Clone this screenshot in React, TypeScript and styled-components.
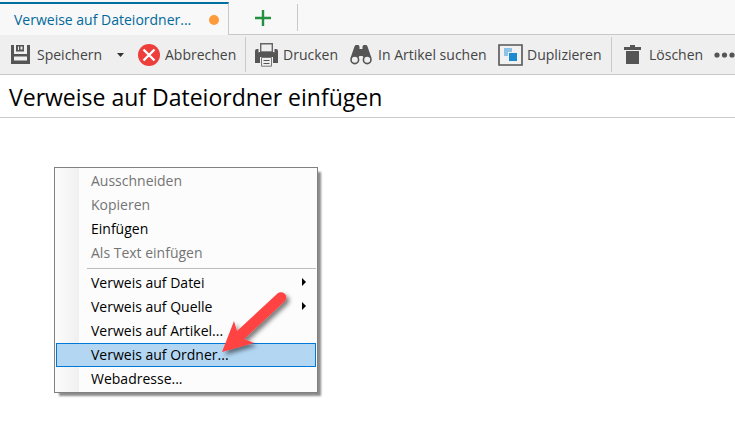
import React from "react";
import styled, { createGlobalStyle } from "styled-components";

const GlobalStyle = createGlobalStyle`
  *, *::before, *::after { box-sizing: border-box; }
  body { margin: 0; background: #fff; overflow-x: hidden; }
  body, button { font-family: "Open Sans", "Noto Sans", sans-serif; }
  button { border: 0; padding: 0; background: none; color: inherit; cursor: pointer; }
  svg { display: block; flex: none; }
`;

const TabStrip = styled.nav`
  display: flex;
  height: 35px;
  padding-top: 2px;
  background: #f8f8f8;
`;

const Tab = styled.button`
  display: flex;
  align-items: center;
  justify-content: space-between;
  width: 229px;
  padding: 0 9px 0 14px;
  border-top: 2px solid #0070a0;
  border-right: 1px solid #c8c8c8;
  color: #00699b;
  font-size: 14px;
  white-space: nowrap;
`;

const ModifiedDot = styled.span`
  width: 10px;
  height: 10px;
  border-radius: 50%;
  background: #fd9a3a;
`;

const TabRest = styled.div`
  display: flex;
  flex: 1;
  padding: 2px 0 3px;
  border-bottom: 1px solid #c8c8c8;
`;

const AddTab = styled.button`
  display: flex;
  align-items: center;
  justify-content: center;
  width: 69px;
  border-right: 1px solid #c8c8c8;
`;

const Toolbar = styled.div`
  display: flex;
  align-items: center;
  height: 40px;
  padding-left: 11px;
  overflow: hidden;
  border-bottom: 1px solid #cacaca;
  background: #efefef;
  color: #444;
`;

const ToolButton = styled.button<{ $width?: number; $gap?: number }>`
  display: flex;
  flex: none;
  align-items: center;
  gap: ${(p) => p.$gap ?? 5}px;
  width: ${(p) => (p.$width ? `${p.$width}px` : "auto")};
  height: 32px;
  font-size: 14px;
  white-space: nowrap;
`;

const Divider = styled.span<{ $space: number }>`
  flex: none;
  width: 1px;
  height: 35px;
  margin-right: ${(p) => p.$space}px;
  background: #cacaca;
`;

const Title = styled.h1`
  display: flex;
  align-items: center;
  height: 43px;
  margin: 0;
  padding: 2px 9px 0;
  border-bottom: 1px solid #cacaca;
  color: #000;
  font-size: 23px;
  font-weight: 400;
  white-space: nowrap;
`;

const Editor = styled.main`
  padding: 49px 54px 28px;
`;

const Menu = styled.div`
  position: relative;
  width: 264px;
  padding: 1px;
  border: 1px solid #808080;
  background: linear-gradient(90deg, #fcfcfc 1px, #fbfbfb 2px, #f0f0f0 24px, #fcfcfc 24px);
  box-shadow: 4px 4px 2px -1px #8c8c8c;
`;

const MenuItem = styled.button<{ $selected?: boolean }>`
  display: flex;
  align-items: center;
  justify-content: space-between;
  width: 100%;
  height: 24px;
  padding: 0 9px 2px 34px;
  border: 1px solid ${(p) => (p.$selected ? "#0078d7" : "transparent")};
  background: ${(p) => (p.$selected ? "#b3d7f3" : "transparent")};
  color: #000;
  font-size: 14px;
  white-space: nowrap;
  &:disabled { color: #747474; cursor: default; }
`;

const Separator = styled.hr`
  height: 1px;
  margin: 3px 0 2px 31px;
  border: 0;
  background: #bdbdbd;
`;

const Pointer = styled.svg`
  position: absolute;
  top: 118px;
  left: 161px;
  pointer-events: none;
`;

const SaveIcon = () => (
  <svg width="19" height="19" viewBox="0 0 19 19" aria-hidden="true">
    <path d="M0 0H3V9H16V0H19V19H0Z" fill="#555" />
    <path d="M5 0H13V6.5H5Z" fill="#555" />
    <path d="M7 1.5H8V5H7ZM9.5 1.5H11.5V4.5H9.5Z" fill="#efefef" />
    <path d="M3 11.5H16V15.5H3Z" fill="#efefef" />
  </svg>
);

const CancelIcon = () => (
  <svg width="22" height="22" viewBox="0 0 22 22" aria-hidden="true">
    <circle cx="11" cy="11" r="11" fill="#ee3e3c" />
    <path d="M5.5 5.5L16.5 16.5M16.5 5.5L5.5 16.5" stroke="#fff" strokeWidth="2.4" />
  </svg>
);

const PrintIcon = () => (
  <svg width="23" height="24" viewBox="0 0 23 24" aria-hidden="true">
    <path d="M0 8Q0 6 2 6H3.5V10H19.5V6H21Q23 6 23 8V20H0Z" fill="#555" />
    <path d="M5.7 9V0.7H17.3V9Z" fill="#efefef" stroke="#666" strokeWidth="1.4" />
    <path d="M3.5 9H19.5V14H3.5Z" fill="#555" />
    <path d="M5 14H18V24H5Z" fill="#efefef" />
    <path d="M6.5 14.5H16.5V23.2H6.5Z" fill="#efefef" stroke="#777" strokeWidth="1" />
    <path d="M8.5 17.5H14.5M8.5 20.5H14.5" stroke="#555" strokeWidth="1.2" />
  </svg>
);

const BinocularsIcon = () => (
  <svg width="22" height="20" viewBox="0 0 22 20" aria-hidden="true">
    <path d="M4.5 1.5L5.5 0H8.5L9.5 1.5V4H12.5V1.5L13.5 0H16.5L17.5 1.5L21.5 13H14L12.5 11H9.5L8 13H0.5Z" fill="#555" />
    <g fill="#efefef" stroke="#555" strokeWidth="1.6">
      <circle cx="4.8" cy="14.8" r="3.8" />
      <circle cx="17.2" cy="14.8" r="3.8" />
    </g>
  </svg>
);

const DuplicateIcon = () => (
  <svg width="25" height="22" viewBox="0 0 25 22" aria-hidden="true">
    <path d="M1 1H24V21H1Z" fill="#f1f1f1" stroke="#555" strokeWidth="1.6" />
    <path d="M6 4H14V12H6Z" fill="#8ec3e7" />
    <path d="M10 8H19V18H10Z" fill="#efefef" />
    <path d="M11 9H19V17H11Z" fill="#1c8ad0" />
  </svg>
);

const TrashIcon = () => (
  <svg width="17" height="19" viewBox="0 0 17 19" aria-hidden="true">
    <path d="M0 2H6V0H11V2H17V5H0ZM2 6H15V19H2Z" fill="#555" />
  </svg>
);

const SubmenuArrow = () => (
  <svg width="4" height="8" viewBox="0 0 4 8" aria-hidden="true">
    <path d="M0 0L4 4L0 8Z" fill="#000" />
  </svg>
);

type Entry = { label: string; disabled?: boolean; submenu?: boolean; selected?: boolean };

const editEntries: Entry[] = [
  { label: "Ausschneiden", disabled: true },
  { label: "Kopieren", disabled: true },
  { label: "Einfügen" },
  { label: "Als Text einfügen", disabled: true },
];

const linkEntries: Entry[] = [
  { label: "Verweis auf Datei", submenu: true },
  { label: "Verweis auf Quelle", submenu: true },
  { label: "Verweis auf Artikel..." },
  { label: "Verweis auf Ordner...", selected: true },
  { label: "Webadresse..." },
];

const Entries = ({ items }: { items: Entry[] }) => (
  <>
    {items.map((item) => (
      <MenuItem
        key={item.label}
        role="menuitem"
        disabled={item.disabled}
        $selected={item.selected}
        aria-haspopup={item.submenu ? "menu" : undefined}
      >
        <span>{item.label}</span>
        {item.submenu && <SubmenuArrow />}
      </MenuItem>
    ))}
  </>
);

export default function App() {
  return (
    <>
      <GlobalStyle />
      <TabStrip>
        <Tab>
          <span>Verweise auf Dateiordner...</span>
          <ModifiedDot />
        </Tab>
        <TabRest>
          <AddTab aria-label="Neuer Tab">
            <svg width="16" height="16" viewBox="0 0 16 16" aria-hidden="true">
              <path d="M8 0V16M0 8H16" stroke="#23913f" strokeWidth="2.4" />
            </svg>
          </AddTab>
        </TabRest>
      </TabStrip>
      <Toolbar role="toolbar">
        <ToolButton $width={106} $gap={7}><SaveIcon />Speichern</ToolButton>
        <ToolButton $width={21} aria-label="Weitere Speicheroptionen">
          <svg width="7" height="4" viewBox="0 0 7 4" aria-hidden="true">
            <path d="M0 0H7L3.5 4Z" fill="#333" />
          </svg>
        </ToolButton>
        <ToolButton $width={107}><CancelIcon />Abbrechen</ToolButton>
        <Divider $space={9} />
        <ToolButton $width={95}><PrintIcon />Drucken</ToolButton>
        <ToolButton $width={148} $gap={6}><BinocularsIcon />In Artikel suchen</ToolButton>
        <ToolButton $width={113} $gap={4}><DuplicateIcon />Duplizieren</ToolButton>
        <Divider $space={12} />
        <ToolButton $width={90} $gap={8}><TrashIcon />Löschen</ToolButton>
        <ToolButton aria-label="Mehr">
          <svg width="21" height="6" viewBox="0 0 21 6" aria-hidden="true">
            <g fill="#555">
              <circle cx="3" cy="3" r="2.6" />
              <circle cx="10.5" cy="3" r="2.6" />
              <circle cx="18" cy="3" r="2.6" />
            </g>
          </svg>
        </ToolButton>
      </Toolbar>
      <Title>Verweise auf Dateiordner einfügen</Title>
      <Editor>
        <Menu role="menu">
          <Entries items={editEntries} />
          <Separator />
          <Entries items={linkEntries} />
          <Pointer width="80" height="76" viewBox="0 0 80 76" aria-hidden="true">
            <defs>
              <filter id="pointer-shadow" x="-20%" y="-20%" width="150%" height="150%">
                <feDropShadow dx="3" dy="3" stdDeviation="2" floodColor="#000" floodOpacity="0.5" />
              </filter>
            </defs>
            <path
              d="M6 66L18 35L21 45L61.5 7.5A5.3 5.3 0 0 1 68.5 15.5L28 53L38 57Z"
              fill="#ff4343"
              filter="url(#pointer-shadow)"
            />
          </Pointer>
        </Menu>
      </Editor>
    </>
  );
}
